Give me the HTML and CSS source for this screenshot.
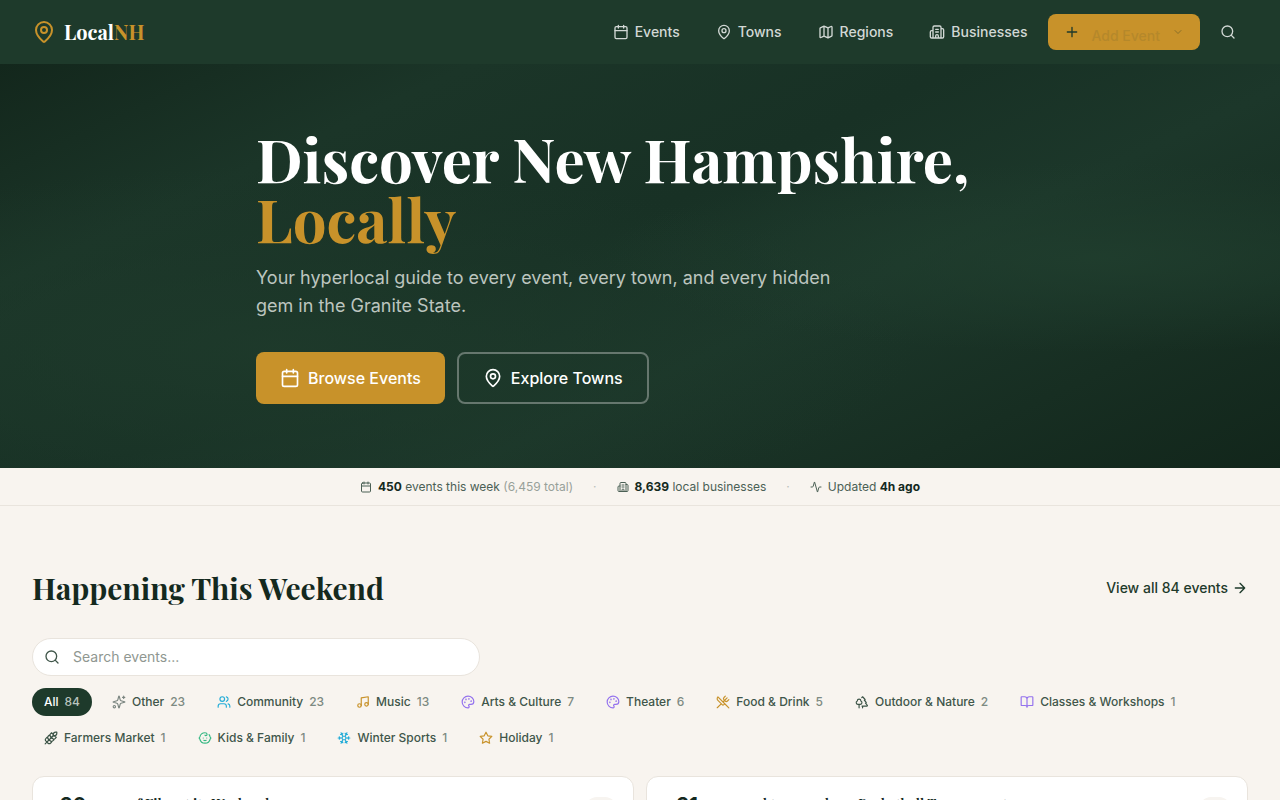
FILE: index.html
```html
<!DOCTYPE html>
<html lang="en">
<head>
<meta charset="utf-8">
<meta name="viewport" content="width=device-width, initial-scale=1">
<title>LocalNH</title>
<link rel="stylesheet" href="styles.css">
</head>
<body>
<svg class="sprite" aria-hidden="true">
  <symbol id="calendar" viewBox="0 0 24 24"><path d="M8 2v4M16 2v4M3 10h18"/><rect x="3" y="4" width="18" height="18" rx="2"/></symbol>
  <symbol id="pin" viewBox="0 0 24 24"><path d="M20 10c0 4.993-5.539 10.193-7.399 11.799a1 1 0 0 1-1.202 0C9.539 20.193 4 14.993 4 10a8 8 0 0 1 16 0"/><circle cx="12" cy="10" r="3"/></symbol>
  <symbol id="map" viewBox="0 0 24 24"><path d="M14.106 5.553a2 2 0 0 0 1.788 0l3.659-1.83A1 1 0 0 1 21 4.619v12.764a1 1 0 0 1-.553.894l-4.553 2.277a2 2 0 0 1-1.788 0l-4.212-2.106a2 2 0 0 0-1.788 0l-3.659 1.83A1 1 0 0 1 3 19.381V6.618a1 1 0 0 1 .553-.894l4.553-2.277a2 2 0 0 1 1.788 0zM15 5.764v15M9 3.236v15"/></symbol>
  <symbol id="building" viewBox="0 0 24 24"><path d="M10 12h4M10 8h4M14 21v-3a2 2 0 0 0-4 0v3M6 10H4a2 2 0 0 0-2 2v7a2 2 0 0 0 2 2h16a2 2 0 0 0 2-2V9a2 2 0 0 0-2-2h-2M6 21V5a2 2 0 0 1 2-2h8a2 2 0 0 1 2 2v16"/></symbol>
  <symbol id="plus" viewBox="0 0 24 24"><path d="M5 12h14M12 5v14"/></symbol>
  <symbol id="chevron" viewBox="0 0 24 24"><path d="m6 9 6 6 6-6"/></symbol>
  <symbol id="search" viewBox="0 0 24 24"><circle cx="11" cy="11" r="8"/><path d="m21 21-4.3-4.3"/></symbol>
  <symbol id="activity" viewBox="0 0 24 24"><path d="M22 12h-2.48a2 2 0 0 0-1.93 1.46l-2.35 8.36a.25.25 0 0 1-.48 0L9.24 2.18a.25.25 0 0 0-.48 0l-2.35 8.36A2 2 0 0 1 4.49 12H2"/></symbol>
  <symbol id="arrow" viewBox="0 0 24 24"><path d="M5 12h14M12 5l7 7-7 7"/></symbol>
  <symbol id="sparkles" viewBox="0 0 24 24"><path d="M9.937 15.5A2 2 0 0 0 8.5 14.063l-6.135-1.582a.5.5 0 0 1 0-.962L8.5 9.936A2 2 0 0 0 9.937 8.5l1.582-6.135a.5.5 0 0 1 .963 0L14.063 8.5A2 2 0 0 0 15.5 9.937l6.135 1.581a.5.5 0 0 1 0 .964L15.5 14.063a2 2 0 0 0-1.437 1.437l-1.582 6.135a.5.5 0 0 1-.963 0zM20 2v4M22 4h-4"/><circle cx="4" cy="20" r="2"/></symbol>
  <symbol id="users" viewBox="0 0 24 24"><path d="M16 21v-2a4 4 0 0 0-4-4H6a4 4 0 0 0-4 4v2M16 3.128a4 4 0 0 1 0 7.744M22 21v-2a4 4 0 0 0-3-3.87"/><circle cx="9" cy="7" r="4"/></symbol>
  <symbol id="music" viewBox="0 0 24 24"><path d="M9 18V5l12-2v13"/><circle cx="6" cy="18" r="3"/><circle cx="18" cy="16" r="3"/></symbol>
  <symbol id="palette" viewBox="0 0 24 24"><path d="M12 22a1 1 0 0 1 0-20 10 9 0 0 1 10 9 5 5 0 0 1-5 5h-2.25a1.75 1.75 0 0 0-1.4 2.8l.3.4a1.75 1.75 0 0 1-1.4 2.8z"/><circle cx="13.5" cy="6.5" r=".5"/><circle cx="17.5" cy="10.5" r=".5"/><circle cx="6.5" cy="12.5" r=".5"/><circle cx="8.5" cy="7.5" r=".5"/></symbol>
  <symbol id="utensils" viewBox="0 0 24 24"><path d="m16 2-2.3 2.3a3 3 0 0 0 0 4.2l1.8 1.8a3 3 0 0 0 4.2 0L22 8M15 15 3.3 3.3a4.2 4.2 0 0 0 0 6l7.3 7.3c.7.7 2 .7 2.8 0L15 15Zm0 0 7 7M2.1 21.8l6.4-6.3M19 5l-7 7"/></symbol>
  <symbol id="trees" viewBox="0 0 24 24"><path d="M10 10v.2A3 3 0 0 1 8.9 16H5a3 3 0 0 1-1-5.8V10a3 3 0 0 1 6 0ZM7 16v6M13 19v3M12 19h8.3a1 1 0 0 0 .7-1.7L18 14h.3a1 1 0 0 0 .7-1.7L16 9h.2a1 1 0 0 0 .8-1.7L13 3l-1.4 1.5"/></symbol>
  <symbol id="book" viewBox="0 0 24 24"><path d="M12 7v14M3 18a1 1 0 0 1-1-1V4a1 1 0 0 1 1-1h5a4 4 0 0 1 4 4 4 4 0 0 1 4-4h5a1 1 0 0 1 1 1v13a1 1 0 0 1-1 1h-6a3 3 0 0 0-3 3 3 3 0 0 0-3-3z"/></symbol>
  <symbol id="wheat" viewBox="0 0 24 24"><path d="M2 22 16 8M3.47 12.53 5 11l1.53 1.53a3.5 3.5 0 0 1 0 4.94L5 19l-1.53-1.53a3.5 3.5 0 0 1 0-4.94ZM7.47 8.53 9 7l1.53 1.53a3.5 3.5 0 0 1 0 4.94L9 15l-1.53-1.53a3.5 3.5 0 0 1 0-4.94ZM11.47 4.53 13 3l1.53 1.53a3.5 3.5 0 0 1 0 4.94L13 11l-1.53-1.53a3.5 3.5 0 0 1 0-4.94ZM20 2h2v2a4 4 0 0 1-4 4h-2V6a4 4 0 0 1 4-4ZM11.47 17.47 13 19l-1.53 1.53a3.5 3.5 0 0 1-4.94 0L5 19l1.53-1.53a3.5 3.5 0 0 1 4.94 0ZM15.47 13.47 17 15l-1.53 1.53a3.5 3.5 0 0 1-4.94 0L9 15l1.53-1.53a3.5 3.5 0 0 1 4.94 0ZM19.47 9.47 21 11l-1.53 1.53a3.5 3.5 0 0 1-4.94 0L13 11l1.53-1.53a3.5 3.5 0 0 1 4.94 0Z"/></symbol>
  <symbol id="baby" viewBox="0 0 24 24"><path d="M9 12h.01M15 12h.01M10 16c.5.3 1.2.5 2 .5s1.5-.2 2-.5M19 6.3a9 9 0 0 1 1.8 3.9 2 2 0 0 1 0 3.6 9 9 0 0 1-17.6 0 2 2 0 0 1 0-3.6A9 9 0 0 1 12 3c2 0 3.5 1.1 3.5 2.5s-.9 2.5-2 2.5c-.8 0-1.5-.4-1.5-1"/></symbol>
  <symbol id="snow" viewBox="0 0 24 24"><path d="m10 20-1.25-2.5L6 18M10 4 8.75 6.5 6 6M14 20l1.25-2.5L18 18M14 4l1.25 2.5L18 6M17 21l-3-6h-4M17 3l-3 6 1.5 3M2 12h6.5L10 9M20 10l-1.5 2 1.5 2M22 12h-6.5L14 15M4 10l1.5 2L4 14M7 21l3-6-1.5-3M7 3l3 6h4"/></symbol>
  <symbol id="star" viewBox="0 0 24 24"><path d="m12 2 3.09 6.26L22 9.27l-5 4.87 1.18 6.88L12 17.77l-6.18 3.25L7 14.14 2 9.27l6.91-1.01L12 2z"/></symbol>
</svg>

<header class="topbar">
  <a class="brand" href="#"><svg class="icon icon-24"><use href="#pin"/></svg><span>Local<span class="accent">NH</span></span></a>
  <nav class="nav">
    <a class="nav-link" href="#"><svg class="icon icon-16"><use href="#calendar"/></svg>Events</a>
    <a class="nav-link" href="#"><svg class="icon icon-16"><use href="#pin"/></svg>Towns</a>
    <a class="nav-link" href="#"><svg class="icon icon-16"><use href="#map"/></svg>Regions</a>
    <a class="nav-link" href="#"><svg class="icon icon-16"><use href="#building"/></svg>Businesses</a>
    <button class="add" type="button"><svg class="icon icon-16"><use href="#plus"/></svg><span class="add-label">Add Event</span><svg class="icon icon-12 add-chevron"><use href="#chevron"/></svg></button>
    <button class="find" type="button" aria-label="Search"><svg class="icon icon-16"><use href="#search"/></svg></button>
  </nav>
</header>

<main>
  <section class="hero">
    <div class="hero-inner">
      <h1>Discover New Hampshire, <span class="accent">Locally</span></h1>
      <p>Your hyperlocal guide to every event, every town, and every hidden gem in the Granite State.</p>
      <div class="actions">
        <a class="btn btn-solid" href="#"><svg class="icon icon-20"><use href="#calendar"/></svg>Browse Events</a>
        <a class="btn btn-line" href="#"><svg class="icon icon-20"><use href="#pin"/></svg>Explore Towns</a>
      </div>
    </div>
  </section>

  <div class="stats">
    <span class="stat"><svg class="icon icon-12"><use href="#calendar"/></svg><span><b>450</b> events this week <span class="faint">(6,459 total)</span></span></span>
    <span class="dot">·</span>
    <span class="stat"><svg class="icon icon-12"><use href="#building"/></svg><span><b>8,639</b> local businesses</span></span>
    <span class="dot">·</span>
    <span class="stat"><svg class="icon icon-12"><use href="#activity"/></svg><span>Updated <b>4h ago</b></span></span>
  </div>

  <section class="weekend">
    <div class="section-head">
      <h2>Happening This Weekend</h2>
      <a class="view-all" href="#">View all 84 events<svg class="icon icon-16"><use href="#arrow"/></svg></a>
    </div>
    <label class="search"><svg class="icon icon-16"><use href="#search"/></svg><input type="search" placeholder="Search events..." aria-label="Search events"></label>
    <div class="chips">
      <button type="button" class="chip active">All <span class="count">84</span></button>
      <button type="button" class="chip"><svg class="icon icon-14 gray"><use href="#sparkles"/></svg>Other <span class="count">23</span></button>
      <button type="button" class="chip"><svg class="icon icon-14 blue"><use href="#users"/></svg>Community <span class="count">23</span></button>
      <button type="button" class="chip"><svg class="icon icon-14 gold"><use href="#music"/></svg>Music <span class="count">13</span></button>
      <button type="button" class="chip"><svg class="icon icon-14 violet"><use href="#palette"/></svg>Arts &amp; Culture <span class="count">7</span></button>
      <button type="button" class="chip"><svg class="icon icon-14 violet"><use href="#palette"/></svg>Theater <span class="count">6</span></button>
      <button type="button" class="chip"><svg class="icon icon-14 gold"><use href="#utensils"/></svg>Food &amp; Drink <span class="count">5</span></button>
      <button type="button" class="chip"><svg class="icon icon-14 forest"><use href="#trees"/></svg>Outdoor &amp; Nature <span class="count">2</span></button>
      <button type="button" class="chip"><svg class="icon icon-14 violet"><use href="#book"/></svg>Classes &amp; Workshops <span class="count">1</span></button>
      <button type="button" class="chip"><svg class="icon icon-14 forest"><use href="#wheat"/></svg>Farmers Market <span class="count">1</span></button>
      <button type="button" class="chip"><svg class="icon icon-14 green"><use href="#baby"/></svg>Kids &amp; Family <span class="count">1</span></button>
      <button type="button" class="chip"><svg class="icon icon-14 blue"><use href="#snow"/></svg>Winter Sports <span class="count">1</span></button>
      <button type="button" class="chip"><svg class="icon icon-14 gold"><use href="#star"/></svg>Holiday <span class="count">1</span></button>
    </div>
    <div class="cards">
      <article class="card"><span class="day">30</span><h3>of Film at its Weekend</h3><span class="badge"></span></article>
      <article class="card"><span class="day">31</span><h3>and team and our Basketball Tournament</h3><span class="badge"></span></article>
    </div>
  </section>
</main>
</body>
</html>
```
FILE: styles.css
```css
* { box-sizing: border-box; }

:root {
  --forest: #1e3a2b;
  --deep: #14291e;
  --gold: #c8922a;
  --cream: #f8f4ef;
  --line: #e9e4dd;
  --serif: "Playfair Display", "Liberation Serif", serif;
}

html { overflow-x: hidden; }

body {
  margin: 0;
  background: var(--cream);
  color: var(--forest);
  font-family: Inter, "Liberation Sans", sans-serif;
  font-size: 14px;
  line-height: 20px;
}

h1, h2, h3, p { margin: 0; }
a { color: inherit; text-decoration: none; }
button, input { font: inherit; color: inherit; }
button { border: 0; background: none; cursor: pointer; }

.sprite { position: absolute; width: 0; height: 0; }
.icon {
  flex: none;
  fill: none;
  stroke: currentColor;
  stroke-width: 2;
  stroke-linecap: round;
  stroke-linejoin: round;
}
.icon-12 { width: 12px; height: 12px; }
.icon-14 { width: 14px; height: 14px; }
.icon-16 { width: 16px; height: 16px; }
.icon-20 { width: 20px; height: 20px; }
.icon-24 { width: 24px; height: 24px; }
.accent, .gold { color: var(--gold); }

.topbar {
  display: flex;
  align-items: center;
  justify-content: space-between;
  height: 64px;
  padding: 0 32px;
  background: var(--forest);
}
.brand {
  display: flex;
  align-items: center;
  gap: 8px;
  color: #fff;
  font: bold 20px/28px var(--serif);
}
.brand .icon { color: var(--gold); }
.nav { display: flex; align-items: center; gap: 4px; }
.nav-link {
  display: flex;
  align-items: center;
  gap: 6px;
  padding: 8px 16px;
  color: #d2d8d5;
  font-weight: 500;
}
.add {
  display: flex;
  align-items: center;
  gap: 12px;
  height: 36px;
  padding: 0 16px;
  border-radius: 8px;
  background: var(--gold);
  color: var(--forest);
  font-weight: 500;
}
.add-label { padding-top: 8px; color: #b5882b; }
.add-chevron { color: #8a7029; }
.find {
  display: grid;
  place-items: center;
  width: 40px;
  height: 40px;
  margin-left: 4px;
  padding: 0;
  color: #d2d8d5;
}

.hero {
  padding: 64px 32px;
  background:
    radial-gradient(ellipse at 86% 48%, rgba(32, 62, 46, .85), transparent 32%),
    radial-gradient(ellipse at 22% 70%, rgba(30, 58, 43, .9), transparent 45%),
    linear-gradient(155deg, #13271c 0%, #1b3528 22%, #183125 45%, #1c372a 62%, #172e22 82%, #12261b 100%);
}
.hero-inner { max-width: 768px; margin: 0 auto; }
.hero h1 {
  color: #fff;
  font: bold 60px/60px var(--serif);
}
.hero h1 .accent { display: block; }
.hero p {
  max-width: 576px;
  margin: 16px 0 32px;
  color: #bcc5bf;
  font-size: 18px;
  line-height: 28px;
}
.actions { display: flex; flex-wrap: wrap; gap: 12px; }
.btn {
  display: flex;
  align-items: center;
  gap: 8px;
  height: 52px;
  padding: 0 24px;
  border-radius: 8px;
  color: #fff;
  font-size: 16px;
  font-weight: 500;
}
.btn-solid { background: var(--gold); }
.btn-line { border: 2px solid #66776e; }

.stats {
  display: flex;
  align-items: center;
  justify-content: center;
  gap: 20px;
  min-height: 38px;
  border-bottom: 1px solid var(--line);
  color: #4b6055;
  font-size: 12px;
  line-height: 16px;
}
.stat { display: flex; align-items: center; gap: 6px; }
.stat b { color: var(--deep); font-weight: 700; }
.faint { color: #98a19a; }
.dot { color: #b9beb8; }

.weekend { padding: 64px 32px; }
.section-head {
  display: flex;
  align-items: center;
  justify-content: space-between;
  margin-bottom: 32px;
}
.section-head h2 {
  color: var(--deep);
  font: bold 30px/36px var(--serif);
}
.view-all { display: flex; align-items: center; gap: 4px; font-weight: 500; }
.search {
  display: flex;
  align-items: center;
  gap: 13px;
  max-width: 448px;
  height: 38px;
  padding: 0 11px;
  border: 1px solid var(--line);
  border-radius: 20px;
  background: #fff;
  color: #40564a;
}
.search input {
  flex: 1;
  min-width: 0;
  padding: 0;
  border: 0;
  outline: 0;
  background: none;
}
.search input::placeholder { color: #8f9791; opacity: 1; }
.chips { display: flex; flex-wrap: wrap; gap: 8px; margin: 12px 0 24px; }
.chip {
  display: flex;
  align-items: center;
  gap: 6px;
  height: 28px;
  padding: 0 12px;
  border-radius: 14px;
  color: #40564a;
  font-size: 12px;
  font-weight: 500;
  line-height: 16px;
}
.chip.active { background: var(--forest); color: #fff; }
.count { color: #7d8a82; }
.active .count { color: #bac4be; }
.gray { color: #7b8580; }
.blue { color: #25add8; }
.violet { color: #9472ee; }
.forest { color: #3b5346; }
.green { color: #35b883; }
.chip .gold { color: var(--gold); }

.cards { display: grid; grid-template-columns: 1fr 1fr; gap: 12px; }
.card {
  display: flex;
  align-items: flex-start;
  gap: 16px;
  padding: 16px;
  border: 1px solid var(--line);
  border-radius: 12px;
  background: #fff;
  color: var(--deep);
}
.day {
  width: 48px;
  text-align: center;
  font-size: 20px;
  font-weight: 700;
  line-height: 24px;
}
.card h3 {
  flex: 1;
  padding: 0 16px;
  font: 600 14px/24px var(--serif);
}
.badge {
  width: 32px;
  height: 24px;
  margin: 4px 0;
  border-radius: 12px;
  background: #f7f4f0;
}
```
